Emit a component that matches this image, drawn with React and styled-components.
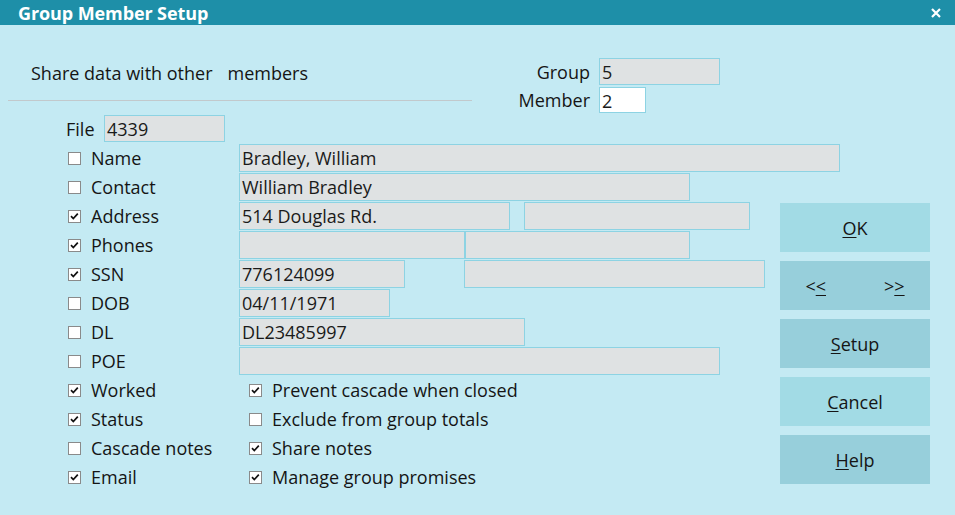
import React from 'react';
import styled, { createGlobalStyle } from 'styled-components';

const GlobalStyle = createGlobalStyle`
  html, body {
    margin: 0;
    padding: 0;
    background: #c4eaf3;
  }
  body {
    font-family: 'Open Sans', 'Noto Sans', sans-serif;
    color: #151515;
  }
`;

const Dialog = styled.div`
  width: 955px;
  height: 515px;
  background: #c4eaf3;
  overflow: hidden;
`;

const TitleBar = styled.div`
  height: 25px;
  background: #1e8fa8;
  color: #fff;
  display: flex;
  align-items: center;
  justify-content: space-between;
  padding: 0 14px 0 18px;
  font-size: 18px;
  font-weight: 700;
  letter-spacing: -0.1px;
`;

const Content = styled.div`
  display: grid;
  grid-template-columns: 780px 150px;
`;

const Header = styled.div`
  height: 90px;
  display: flex;
`;

const HeaderLeft = styled.div`
  width: 464px;
  margin-left: 8px;
  display: flex;
  flex-direction: column;
  justify-content: flex-end;
`;

const ShareText = styled.div`
  padding-left: 23px;
  font-size: 18px;
  line-height: 22px;
  margin-bottom: 16px;
  span { margin-left: 15px; }
`;

const Separator = styled.div`
  height: 1px;
  background: #c2c9cc;
  margin-bottom: 14px;
`;

const GroupGrid = styled.div`
  display: grid;
  grid-template-columns: 100px auto;
  column-gap: 9px;
  row-gap: 2px;
  margin-left: 18px;
  padding-top: 33px;
  align-items: center;
  align-content: start;
`;

const SideLabel = styled.div`
  text-align: right;
  font-size: 18px;
`;

const Field = styled.div`
  box-sizing: border-box;
  width: ${({ w }) => w}px;
  height: ${({ h }) => h || 28}px;
  background: ${({ white }) => (white ? '#ffffff' : '#dfe2e3')};
  border: 1px solid #8dd3e3;
  font-size: 18px;
  line-height: 26px;
  padding-left: 2px;
  color: #1a1a1a;
  white-space: nowrap;
  overflow: hidden;
  flex: none;
`;

const Form = styled.div`
  display: flex;
  flex-direction: column;
`;

const Row = styled.div`
  height: 29px;
  display: flex;
  align-items: flex-start;
`;

const FileLabel = styled.div`
  margin-left: 66px;
  margin-right: 8px;
  width: 30px;
  font-size: 18px;
  line-height: 28px;
`;

const CheckCell = styled.label`
  margin-left: 68px;
  width: 171px;
  height: 28px;
  display: flex;
  align-items: center;
  gap: 10px;
  font-size: 18px;
  flex: none;
`;

const InnerCheck = styled(CheckCell)`
  margin-left: 10px;
  width: auto;
`;

const Fields = styled.div`
  display: flex;
  gap: ${({ gap }) => gap || 0}px;
`;

const Box = styled.svg`
  flex: none;
  display: block;
`;

const ButtonColumn = styled.div`
  padding-top: 178px;
  display: flex;
  flex-direction: column;
  gap: 9px;
`;

const Button = styled.button`
  width: 150px;
  height: 49px;
  border: 0;
  padding: 0;
  background: ${({ dark }) => (dark ? '#97cfdb' : '#a2dbe5')};
  font-family: 'Open Sans', 'Noto Sans', sans-serif;
  font-size: 18px;
  color: #151515;
  display: flex;
  align-items: center;
  justify-content: center;
  gap: ${({ gap }) => gap || 0}px;
  u { text-decoration-thickness: 1px; text-underline-offset: 2px; }
`;

function Check({ on }) {
  return (
    <Box width="13" height="13" viewBox="0 0 13 13">
      <rect x="0.5" y="0.5" width="12" height="12" fill="#fff" stroke="#8a8a8a" />
      {on && <path d="M3 6.2 L5.3 8.6 L9.8 3.6" fill="none" stroke="#111" strokeWidth="1.7" />}
    </Box>
  );
}

function CloseIcon() {
  return (
    <svg width="10" height="10" viewBox="0 0 10 10">
      <path d="M1 1 L9 9 M9 1 L1 9" stroke="#fff" strokeWidth="2.2" />
    </svg>
  );
}

const rows = [
  { label: 'Name', on: false, fields: [{ w: 601, v: 'Bradley, William' }] },
  { label: 'Contact', on: false, fields: [{ w: 451, v: 'William Bradley' }] },
  { label: 'Address', on: true, gap: 14, fields: [{ w: 271, v: '514 Douglas Rd.' }, { w: 226, v: '' }] },
  { label: 'Phones', on: true, fields: [{ w: 226, v: '' }, { w: 225, v: '' }] },
  { label: 'SSN', on: true, gap: 59, fields: [{ w: 166, v: '776124099' }, { w: 301, v: '' }] },
  { label: 'DOB', on: false, fields: [{ w: 151, v: '04/11/1971' }] },
  { label: 'DL', on: false, fields: [{ w: 286, v: 'DL23485997' }] },
  { label: 'POE', on: false, fields: [{ w: 481, v: '' }] },
];

const optionRows = [
  ['Worked', true, 'Prevent cascade when closed', true],
  ['Status', true, 'Exclude from group totals', false],
  ['Cascade notes', false, 'Share notes', true],
  ['Email', true, 'Manage group promises', true],
];

export default function App() {
  return (
    <Dialog>
      <GlobalStyle />
      <TitleBar>
        <span>Group Member Setup</span>
        <CloseIcon />
      </TitleBar>
      <Content>
        <div>
          <Header>
            <HeaderLeft>
              <ShareText>
                Share data with other
                <span>members</span>
              </ShareText>
              <Separator />
            </HeaderLeft>
            <GroupGrid>
              <SideLabel>Group</SideLabel>
              <Field w={121} h={27}>5</Field>
              <SideLabel>Member</SideLabel>
              <Field w={47} h={26} white>2</Field>
            </GroupGrid>
          </Header>
          <Form>
            <Row>
              <FileLabel>File</FileLabel>
              <Field w={121} h={27}>4339</Field>
            </Row>
            {rows.map((r) => (
              <Row key={r.label}>
                <CheckCell>
                  <Check on={r.on} />
                  {r.label}
                </CheckCell>
                <Fields gap={r.gap}>
                  {r.fields.map((f, i) => (
                    <Field key={i} w={f.w}>{f.v}</Field>
                  ))}
                </Fields>
              </Row>
            ))}
            {optionRows.map(([a, aOn, b, bOn]) => (
              <Row key={a}>
                <CheckCell>
                  <Check on={aOn} />
                  {a}
                </CheckCell>
                <InnerCheck>
                  <Check on={bOn} />
                  {b}
                </InnerCheck>
              </Row>
            ))}
          </Form>
        </div>
        <ButtonColumn>
          <Button><span><u>O</u>K</span></Button>
          <Button dark gap={58}>
            <span>&lt;<u>&lt;</u></span>
            <span>&gt;<u>&gt;</u></span>
          </Button>
          <Button dark><span><u>S</u>etup</span></Button>
          <Button><span><u>C</u>ancel</span></Button>
          <Button dark><span><u>H</u>elp</span></Button>
        </ButtonColumn>
      </Content>
    </Dialog>
  );
}
